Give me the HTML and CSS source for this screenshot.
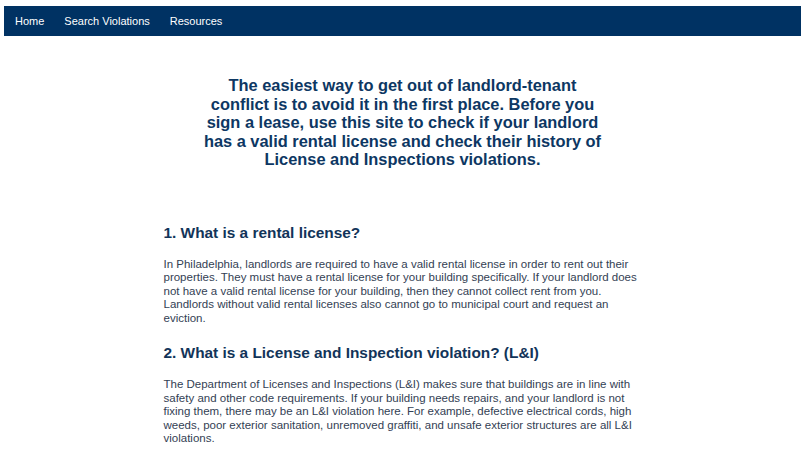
FILE: index.html
```html
<!DOCTYPE html>
<html lang="en">
<head>
<meta charset="utf-8">
<title>Landlord Check</title>
<link rel="stylesheet" href="styles.css">
</head>
<body>
<nav class="navbar">
  <a class="nav-link" href="#">Home</a>
  <a class="nav-link" href="#">Search Violations</a>
  <a class="nav-link" href="#">Resources</a>
</nav>
<main class="page">
  <h1 class="hero">The easiest way to get out of landlord-tenant conflict is to avoid it in the first place. Before you sign a lease, use this site to check if your landlord has a valid rental license and check their history of License and Inspections violations.</h1>
  <section class="faq">
    <h2 class="faq-title">1. What is a rental license?</h2>
    <p class="faq-text">In Philadelphia, landlords are required to have a valid rental license in order to rent out their properties. They must have a rental license for your building specifically. If your landlord does not have a valid rental license for your building, then they cannot collect rent from you. Landlords without valid rental licenses also cannot go to municipal court and request an eviction.</p>
    <h2 class="faq-title">2. What is a License and Inspection violation? (L&amp;I)</h2>
    <p class="faq-text">The Department of Licenses and Inspections (L&amp;I) makes sure that buildings are in line with safety and other code requirements. If your building needs repairs, and your landlord is not fixing them, there may be an L&amp;I violation here. For example, defective electrical cords, high weeds, poor exterior sanitation, unremoved graffiti, and unsafe exterior structures are all L&amp;I violations.</p>
    <h2 class="faq-title">3. What can you do about an L&amp;I violation?</h2>
  </section>
</main>
</body>
</html>
```
FILE: styles.css
```css
html, body {
  margin: 0;
  padding: 0;
  background: #ffffff;
  font-family: "Liberation Sans", Arial, sans-serif;
  overflow: hidden;
}
body {
  padding: 6px 5px 0 4px;
}
.navbar {
  display: flex;
  align-items: center;
  height: 30px;
  background: #003263;
  padding-left: 11px;
  gap: 20px;
}
.nav-link {
  color: #ffffff;
  text-decoration: none;
  font-size: 11px;
}
.page {
  display: flex;
  flex-direction: column;
  align-items: center;
}
.hero {
  width: 400px;
  margin: 40px 0 0;
  text-align: center;
  color: #0d3763;
  font-size: 16.4px;
  line-height: 18.5px;
  font-weight: bold;
}
.faq {
  width: 478px;
  margin-top: 54px;
}
.faq-title {
  margin: 0;
  color: #123459;
  font-size: 15.4px;
  line-height: 20px;
  font-weight: bold;
}
.faq-text {
  margin: 15px 0 18px;
  color: #334154;
  font-size: 11.5px;
  line-height: 13.5px;
}
```
